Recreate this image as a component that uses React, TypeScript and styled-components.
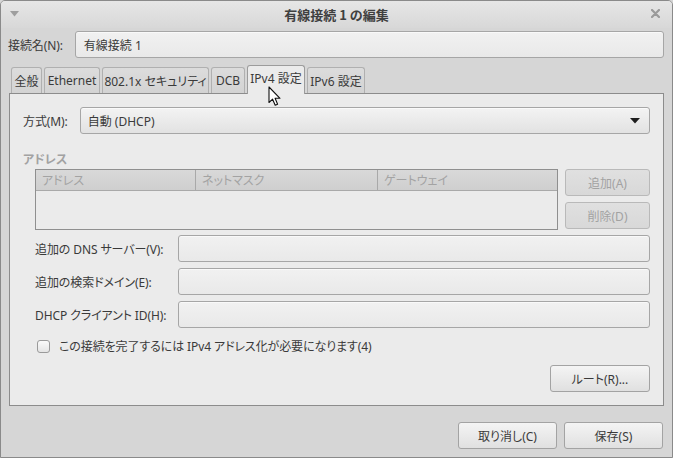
import React from "react";
import styled, { createGlobalStyle, css } from "styled-components";

const Global = createGlobalStyle`
  html, body { margin: 0; padding: 0; width: 673px; height: 458px; overflow: hidden; background: #d6d6d6; }
  * { box-sizing: border-box; }
  body {
    font-family: "Noto Sans", "Noto Sans CJK JP", sans-serif;
    font-size: 12px;
    color: #3a3a3a;
    font-feature-settings: "palt" 1;
  }
`;

const Window = styled.div`
  position: relative;
  width: 673px;
  height: 458px;
  border: 1px solid #8a8a8a;
  border-radius: 5px 5px 0 0;
  background: #d6d6d6;
  display: flex;
  flex-direction: column;
  overflow: hidden;
`;

const TitleBar = styled.div`
  height: 27px;
  flex: none;
  display: grid;
  grid-template-columns: 30px 1fr 30px;
  align-items: center;
  background: linear-gradient(#e6e6e6, #d8d8d8);
`;

const Title = styled.div`
  text-align: center;
  font-family: "Noto Sans CJK JP", sans-serif;
  font-size: 13px;
  font-weight: 700;
  color: #404040;
  line-height: 27px;
  font-feature-settings: normal;
`;

const TitleIcon = styled.div<{ $align: "start" | "end" }>`
  display: flex;
  justify-content: ${(p) => (p.$align === "start" ? "flex-start" : "flex-end")};
  padding: ${(p) => (p.$align === "start" ? "0 0 2px 9px" : "0 12px 2px 0")};
  align-items: center;
`;

const Body = styled.div`
  flex: 1;
  display: flex;
  flex-direction: column;
  padding: 3px 8px 0 7px;
`;

const NameRow = styled.div`
  display: flex;
  align-items: center;
  gap: 12px;
  height: 27px;
`;

const Label = styled.label<{ $muted?: boolean }>`
  font-family: "Noto Sans", "Noto Sans CJK JP", sans-serif;
  font-size: 12px;
  color: ${(p) => (p.$muted ? "#a0a0a0" : "#3a3a3a")};
  white-space: nowrap;
  letter-spacing: -0.1px;
`;

const fieldLook = css`
  height: 27px;
  border: 1px solid #a6a6a6;
  border-radius: 3px;
  background: linear-gradient(#f1f1f1, #e9e9e9);
  box-shadow: inset 0 1px 0 rgba(255, 255, 255, 0.6);
`;

const TextField = styled.div`
  ${fieldLook};
  flex: 1;
  display: flex;
  align-items: center;
  padding: 0 8px;
  font-family: "Noto Sans", "Noto Sans CJK JP", sans-serif;
  font-size: 12px;
  color: #3a3a3a;
`;

const TabStrip = styled.div`
  margin-top: 7px;
  padding-left: 3px;
  display: flex;
  align-items: flex-end;
  gap: 2px;
  position: relative;
  z-index: 1;
`;

const Tab = styled.div<{ $w: number; $active?: boolean }>`
  width: ${(p) => p.$w}px;
  height: ${(p) => (p.$active ? 29 : 26)}px;
  margin-bottom: ${(p) => (p.$active ? -1 : 0)}px;
  border: 1px solid ${(p) => (p.$active ? "#9c9c9c" : "#b0b0b0")};
  border-bottom: none;
  border-radius: 3px 3px 0 0;
  background: ${(p) => (p.$active ? "#ebebeb" : "linear-gradient(#dcdcdc, #d3d3d3)")};
  display: flex;
  align-items: center;
  justify-content: center;
  padding-bottom: ${(p) => (p.$active ? 4 : 0)}px;
  font-family: "Noto Sans", "Noto Sans CJK JP", sans-serif;
  font-size: 12px;
  color: #3a3a3a;
  white-space: nowrap;
`;

const Panel = styled.div`
  margin-left: 1px;
  height: 313px;
  border: 1px solid #8c8c8c;
  background: #ebebeb;
  padding: 13px 13px 13px 13px;
  display: flex;
  flex-direction: column;
`;

const MethodRow = styled.div`
  display: flex;
  align-items: center;
  gap: 12px;
`;

const Combo = styled.div`
  ${fieldLook};
  flex: 1;
  background: linear-gradient(#f3f3f3, #e2e2e2);
  display: flex;
  align-items: center;
  justify-content: space-between;
  padding: 0 9px 0 7px;
  color: #3a3a3a;
`;

const SectionTitle = styled.div`
  margin-top: 16px;
  height: 17px;
  font-family: "Noto Sans CJK JP", sans-serif;
  font-weight: 700;
  font-size: 12px;
  color: #a2a2a2;
`;

const AddressBlock = styled.div`
  margin: 2px 0 0 12px;
  display: flex;
  gap: 7px;
`;

const Table = styled.div`
  flex: 1;
  height: 61px;
  border: 1px solid #8f8f8f;
  background: #ebebeb;
`;

const TableHead = styled.div`
  display: grid;
  grid-template-columns: 160px 182px 1fr;
  height: 21px;
  background: linear-gradient(#d9d9d9, #cfcfcf);
  border-bottom: 1px solid #a9a9a9;
`;

const HeadCell = styled.div<{ $last?: boolean }>`
  display: flex;
  align-items: center;
  padding-left: 6px;
  border-right: ${(p) => (p.$last ? "none" : "1px solid #a9a9a9")};
  color: #a3a3a3;
  font-size: 12px;
`;

const ButtonCol = styled.div`
  width: 85px;
  display: flex;
  flex-direction: column;
  gap: 6px;
`;

const Button = styled.button<{ $w?: number; $disabled?: boolean }>`
  width: ${(p) => (p.$w ? `${p.$w}px` : "100%")};
  height: 27px;
  border: 1px solid ${(p) => (p.$disabled ? "#b9b9b9" : "#a3a3a3")};
  border-radius: 3px;
  background: ${(p) =>
    p.$disabled ? "linear-gradient(#e0e0e0, #d8d8d8)" : "linear-gradient(#f4f4f4, #e0e0e0)"};
  color: ${(p) => (p.$disabled ? "#a2a2a2" : "#3a3a3a")};
  font-family: "Noto Sans", "Noto Sans CJK JP", sans-serif;
  font-size: 12px;
  font-feature-settings: "palt" 1;
  padding: 0;
  display: flex;
  align-items: center;
  justify-content: center;
`;

const FormGrid = styled.div`
  margin: 5px 0 0 12px;
  display: grid;
  grid-template-columns: 143px 1fr;
  row-gap: 6px;
  align-items: center;
`;

const CheckRow = styled.div`
  margin: 9px 0 0 14px;
  display: flex;
  align-items: center;
  gap: 9px;
`;

const Check = styled.span`
  width: 13px;
  height: 13px;
  border: 1px solid #9a9a9a;
  border-radius: 3px;
  background: linear-gradient(#fafafa, #e4e4e4);
`;

const RouteRow = styled.div`
  margin-top: auto;
  display: flex;
  justify-content: flex-end;
`;

const Footer = styled.div`
  flex: 1;
  display: flex;
  justify-content: flex-end;
  align-items: flex-start;
  gap: 7px;
  padding-top: 16px;
  padding-right: 1px;
`;

const Cursor = styled.svg`
  position: absolute;
  left: 267px;
  top: 85px;
  z-index: 5;
`;

const tabs = [
  { label: "全般", w: 31 },
  { label: "Ethernet", w: 56 },
  { label: "802.1x セキュリティ", w: 107 },
  { label: "DCB", w: 34 },
  { label: "IPv4 設定", w: 58, active: true },
  { label: "IPv6 設定", w: 58 },
];

export default function App() {
  return (
    <>
      <Global />
      <Window>
        <TitleBar>
          <TitleIcon $align="start">
            <svg width="9" height="6" viewBox="0 0 9 6">
              <path d="M0 0 H9 L4.5 5.5 Z" fill="#9e9e9e" />
            </svg>
          </TitleIcon>
          <Title>有線接続 1 の編集</Title>
          <TitleIcon $align="end">
            <svg width="9" height="9" viewBox="0 0 9 9">
              <path d="M1 1 L8 8 M8 1 L1 8" stroke="#9a9a9a" strokeWidth="2.2" strokeLinecap="round" />
            </svg>
          </TitleIcon>
        </TitleBar>
        <Body>
          <NameRow>
            <Label>接続名(N):</Label>
            <TextField>有線接続 1</TextField>
          </NameRow>
          <TabStrip>
            {tabs.map((t) => (
              <Tab key={t.label} $w={t.w} $active={t.active}>
                {t.label}
              </Tab>
            ))}
          </TabStrip>
          <Panel>
            <MethodRow>
              <Label>方式(M):</Label>
              <Combo>
                <span>自動 (DHCP)</span>
                <svg width="10" height="6" viewBox="0 0 10 6">
                  <path d="M0 0 H10 L5 5.5 Z" fill="#1e1e1e" />
                </svg>
              </Combo>
            </MethodRow>
            <SectionTitle>アドレス</SectionTitle>
            <AddressBlock>
              <Table>
                <TableHead>
                  <HeadCell>アドレス</HeadCell>
                  <HeadCell>ネットマスク</HeadCell>
                  <HeadCell $last>ゲートウェイ</HeadCell>
                </TableHead>
              </Table>
              <ButtonCol>
                <Button $disabled>追加(A)</Button>
                <Button $disabled>削除(D)</Button>
              </ButtonCol>
            </AddressBlock>
            <FormGrid>
              <Label>追加の DNS サーバー(V):</Label>
              <TextField />
              <Label>追加の検索ドメイン(E):</Label>
              <TextField />
              <Label>DHCP クライアント ID(H):</Label>
              <TextField />
            </FormGrid>
            <CheckRow>
              <Check />
              <Label>この接続を完了するには IPv4 アドレス化が必要になります(4)</Label>
            </CheckRow>
            <RouteRow>
              <Button $w={100}>ルート(R)...</Button>
            </RouteRow>
          </Panel>
          <Footer>
            <Button $w={99}>取り消し(C)</Button>
            <Button $w={99}>保存(S)</Button>
          </Footer>
        </Body>
        <Cursor width="14" height="21" viewBox="0 0 14 21">
          <path
            d="M1 1 L1 16.5 L4.6 13.2 L7.2 19.2 L9.6 18.2 L7.1 12.3 L12 12.3 Z"
            fill="#ffffff"
            stroke="#111"
            strokeWidth="1.1"
            strokeLinejoin="round"
          />
        </Cursor>
      </Window>
    </>
  );
}
